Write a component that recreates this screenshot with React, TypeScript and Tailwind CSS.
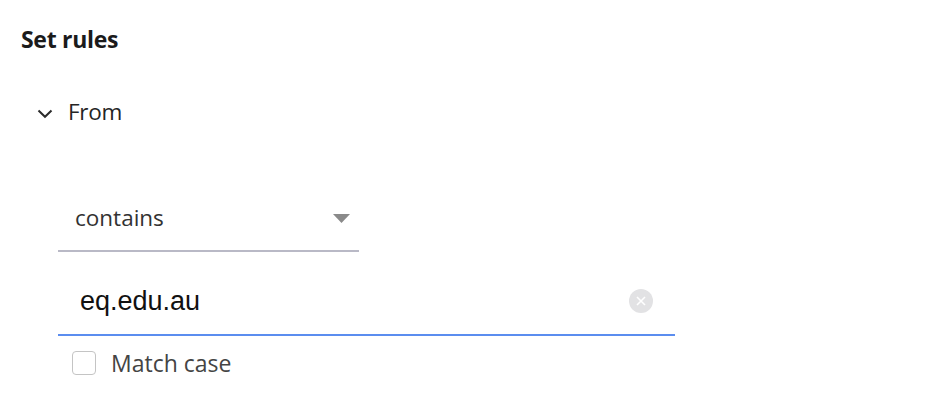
export default function App() {
    return (
        <div className="w-[940px] h-[406px] bg-white pl-[21px] pt-[20px] font-['Open_Sans',sans-serif] overflow-hidden">
            <h2 className="h-[38px] leading-[38px] text-[23px] font-bold text-[#1b1b1b] tracking-[-0.3px]">Set rules</h2>

            <div className="mt-[35px] flex items-center h-[38px] pl-[16px] gap-[15px]">
                <svg width="16" height="10" viewBox="0 0 16 10" className="mt-[3px]">
                    <path d="M1.5 1.5 L8 7.8 L14.5 1.5" fill="none" stroke="#2b2b2b" strokeWidth="2" />
                </svg>
                <span className="text-[22.5px] leading-[38px] text-[#252525] tracking-[-0.3px]">From</span>
            </div>

            <div className="ml-[37px] mt-[55px] w-[301px] h-[66px] border-b-2 border-[#b9b9c6] flex items-center justify-between pl-[17px] pr-[9px]">
                <span className="text-[22.5px] text-[#323232]">contains</span>
                <svg width="17" height="9" viewBox="0 0 17 9">
                    <polygon points="0,0 17,0 8.5,9" fill="#8a8a8a" />
                </svg>
            </div>

            <div className="ml-[37px] mt-[16px] w-[617px] h-[68px] border-b-2 border-[#5b8def] flex items-center justify-between pl-[22px] pr-[22px]">
                <span className="font-['Liberation_Sans',sans-serif] text-[27px] text-[#111]">eq.edu.au</span>
                <svg width="24" height="24" viewBox="0 0 24 24">
                    <circle cx="12" cy="12" r="12" fill="#e2e2e4" />
                    <path d="M8 8 L16 16 M16 8 L8 16" stroke="#ffffff" strokeWidth="1.6" />
                </svg>
            </div>

            <label className="ml-[51px] mt-[14px] h-[26px] flex items-center gap-[15px]">
                <span className="w-[24px] h-[24px] rounded-[4px] border-[1.5px] border-[#c4c4c4] bg-white" />
                <span className="text-[23px] text-[#444]">Match case</span>
            </label>
        </div>
    )
}
